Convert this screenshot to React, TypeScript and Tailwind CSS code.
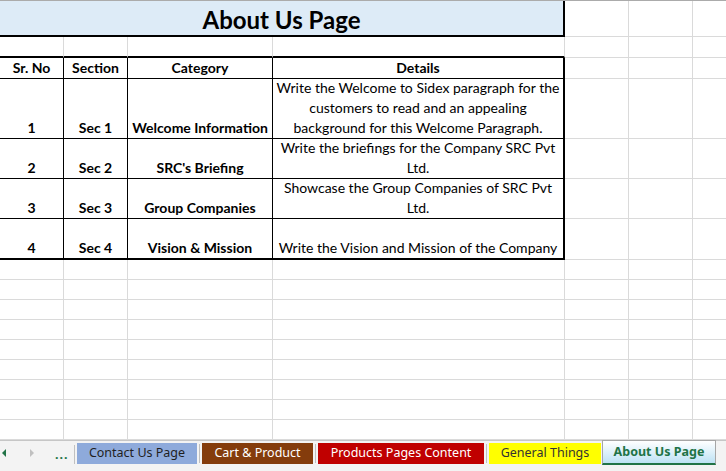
import React from 'react'

const rows = [
  {
    no: '1',
    sec: 'Sec 1',
    cat: 'Welcome Information',
    details: [
      'Write the Welcome to Sidex paragraph for the',
      'customers to read and an appealing',
      'background for this Welcome Paragraph.',
    ],
    h: 'h-[60px]',
    last: false,
  },
  {
    no: '2',
    sec: 'Sec 2',
    cat: "SRC's Briefing",
    details: ['Write the briefings for the Company SRC Pvt', 'Ltd.'],
    h: 'h-[40px]',
    last: false,
  },
  {
    no: '3',
    sec: 'Sec 3',
    cat: 'Group Companies',
    details: ['Showcase the Group Companies of SRC Pvt', 'Ltd.'],
    h: 'h-[40px]',
    last: false,
  },
  {
    no: '4',
    sec: 'Sec 4',
    cat: 'Vision & Mission',
    details: ['Write the Vision and Mission of the Company'],
    h: 'h-[41px]',
    last: true,
  },
]

// empty cells to the right of the table
function Blank({ h }: { h: string }) {
  return (
    <>
      <div className={`${h} border-r border-b border-[#dadada]`}></div>
      <div className={`${h} border-r border-b border-[#dadada]`}></div>
      <div className={`${h} border-b border-[#dadada]`}></div>
    </>
  )
}

export default function App() {
  const cell = 'flex items-end justify-center text-center leading-[20px] border-black'

  return (
    <div className="w-[726px] h-[471px] overflow-hidden bg-white text-black font-['Lato',sans-serif] text-[14px]">
      <div className="h-px bg-[#ababab]"></div>

      <div className="grid grid-cols-[64px_64px_145px_292px_64px_64px_1fr]">
        {/* title */}
        <div className="col-span-4 h-[36px] bg-[#ddebf7] border-b-2 border-r-2 border-black flex items-end justify-center leading-[28px] pb-[1px]">
          <span className="text-[24px] font-bold">About Us Page</span>
        </div>
        <Blank h="h-[36px]" />

        {/* spacer row */}
        <div className="h-[21px] border-r border-r-[#dadada] border-b-2 border-b-black"></div>
        <div className="h-[21px] border-r border-r-[#dadada] border-b-2 border-b-black"></div>
        <div className="h-[21px] border-r border-r-[#dadada] border-b-2 border-b-black"></div>
        <div className="h-[21px] border-r border-r-[#dadada] border-b-2 border-b-black"></div>
        <Blank h="h-[21px]" />

        {/* header */}
        <div className={`${cell} h-[21px] border-r border-b font-bold`}>Sr. No</div>
        <div className={`${cell} h-[21px] border-r border-b font-bold`}>Section</div>
        <div className={`${cell} h-[21px] border-r border-b font-bold`}>Category</div>
        <div className={`${cell} h-[21px] border-r-2 border-b font-bold`}>Details</div>
        <Blank h="h-[21px]" />

        {rows.map((r) => {
          const b = r.last ? 'border-b-2' : 'border-b'
          return (
            <React.Fragment key={r.no}>
              <div className={`${cell} ${r.h} border-r ${b} font-bold`}>{r.no}</div>
              <div className={`${cell} ${r.h} border-r ${b} font-bold`}>{r.sec}</div>
              <div className={`${cell} ${r.h} border-r ${b} font-bold`}>{r.cat}</div>
              <div className={`${r.h} border-r-2 ${b} border-black flex flex-col items-center justify-end text-center leading-[20px]`}>
                {r.details.map((line) => (
                  <div key={line} className="whitespace-nowrap">{line}</div>
                ))}
              </div>
              <Blank h={r.h} />
            </React.Fragment>
          )
        })}

        {Array.from({ length: 9 }).map((_, i) => (
          <React.Fragment key={i}>
            <div className="h-[20px] border-r border-b border-[#dadada]"></div>
            <div className="h-[20px] border-r border-b border-[#dadada]"></div>
            <div className="h-[20px] border-r border-b border-[#dadada]"></div>
            <div className="h-[20px] border-r border-b border-[#dadada]"></div>
            <Blank h="h-[20px]" />
          </React.Fragment>
        ))}
      </div>

      {/* sheet tabs */}
      <div className="h-[31px] border-t border-[#c6c6c6] bg-[#f3f3f3] flex items-start font-['Noto_Sans',sans-serif] text-[12.5px]">
        <div className="w-[72px] h-[24px] flex items-center">
          <span className="ml-[2px] w-0 h-0 border-y-[4px] border-y-transparent border-r-[4px] border-r-[#217346]"></span>
          <span className="ml-[24px] w-0 h-0 border-y-[4px] border-y-transparent border-l-[4px] border-l-[#c0c0c0]"></span>
          <span className="ml-[21px] text-[#217346] font-bold tracking-[1px] leading-none mt-[4px]">...</span>
        </div>
        <div className="w-px h-[19px] mt-[4px] mx-[2px] bg-[#c0c0c0]"></div>
        <div className="w-[120px] h-[21px] mt-[2px] bg-[#8eaadb] text-[#1f1f1f] flex items-center justify-center">Contact Us Page</div>
        <div className="w-px h-[19px] mt-[3px] mx-[2px] bg-[#c0c0c0]"></div>
        <div className="w-[111px] h-[21px] mt-[2px] bg-[#843c0c] text-white flex items-center justify-center">Cart &amp; Product</div>
        <div className="w-px h-[19px] mt-[3px] mx-[2px] bg-[#c0c0c0]"></div>
        <div className="w-[166px] h-[21px] mt-[2px] bg-[#c00000] text-white flex items-center justify-center">Products Pages Content</div>
        <div className="w-px h-[19px] mt-[3px] mx-[2px] bg-[#c0c0c0]"></div>
        <div className="w-[112px] h-[21px] mt-[2px] bg-[#ffff00] text-[#333333] flex items-center justify-center">General Things</div>
        <div className="w-[114px] h-[25px] -mt-px ml-[1px] border-x border-t border-[#a6a6a6] border-b-2 border-b-[#217346] bg-linear-to-b from-white to-[#bde2f4] text-[#217346] font-bold flex items-center justify-center">
          About Us Page
        </div>
      </div>
    </div>
  )
}
